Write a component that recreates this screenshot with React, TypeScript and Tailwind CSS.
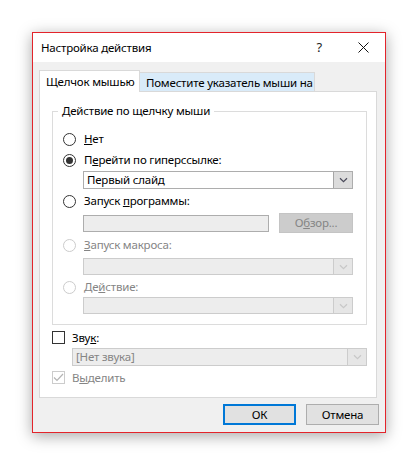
import type { ReactNode } from "react";

const font = "font-['Noto_Sans','Open_Sans',sans-serif]";

const Chevron = ({ muted }: { muted?: boolean }) => (
  <svg width="9" height="6" viewBox="0 0 9 6" fill="none">
    <path d="M1 1.2 4.5 4.6 8 1.2" stroke={muted ? "#c8c8c8" : "#4a4a5a"} strokeWidth="1.2" />
  </svg>
);

const Radio = ({
  checked,
  disabled,
  children,
}: {
  checked?: boolean;
  disabled?: boolean;
  children: ReactNode;
}) => (
  <div className="flex h-[16px] items-center">
    <span
      className={`ml-[10px] flex h-[13px] w-[13px] items-center justify-center rounded-full border bg-white ${
        disabled ? "border-[#cccccc]" : "border-[#333333]"
      }`}
    >
      {checked && <span className="h-[7px] w-[7px] rounded-full bg-[#333333]" />}
    </span>
    <span className={`ml-[8px] ${disabled ? "text-[#858585]" : "text-black"}`}>{children}</span>
  </div>
);

const Select = ({
  value,
  disabled,
  className,
}: {
  value?: string;
  disabled?: boolean;
  className: string;
}) => (
  <div
    className={`flex border ${
      disabled ? "border-[#cccccc] bg-[#ededed]" : "border-[#adadad] bg-white"
    } ${className}`}
  >
    <span className={`flex-1 pl-[3px] leading-[15px] ${disabled ? "text-[#858585]" : "text-black"}`}>
      {value}
    </span>
    <span
      className={`flex w-[19px] items-center justify-center border-l ${
        disabled ? "border-[#cccccc] bg-[#e6e6e6]" : "border-[#a6a6a6] bg-[#dcdcdc]"
      }`}
    >
      <Chevron muted={disabled} />
    </span>
  </div>
);

export default function App() {
  return (
    <div className={`h-[466px] w-[418px] bg-white pl-[32px] pt-[32px] text-[11.5px] tracking-[-0.2px] ${font}`}>
      <div className="flex h-[401px] w-[354px] flex-col border border-[#e3242b] bg-[#f0f0f0] shadow-[0_3px_14px_rgba(0,0,0,0.35)]">
        {/* title bar */}
        <div className="flex h-[29px] items-center bg-white pl-[8px]">
          <span className="flex-1 text-black">Настройка действия</span>
          <span className="mr-[36px] text-[13px] text-[#222]">?</span>
          <svg width="11" height="11" viewBox="0 0 11 11" className="mr-[16px]">
            <path d="M0.5 0.5 10.5 10.5M10.5 0.5 0.5 10.5" stroke="#111" strokeWidth="1" />
          </svg>
        </div>

        <div className="flex flex-1 flex-col px-[6px] pt-[8px]">
          {/* tabs */}
          <div className="flex h-[21px] items-end">
            <div className="relative z-10 -mb-px flex h-[22px] w-[101px] items-center whitespace-nowrap border border-b-0 border-[#d9d9d9] bg-white pl-[6px] text-black">
              Щелчок мышью
            </div>
            <div className="flex h-[19px] w-[175px] items-center overflow-hidden whitespace-nowrap border border-b-0 border-l-0 border-[#d9d9d9] bg-[#d9ebf9] pl-[6px] pt-[1px] text-black">
              Поместите указатель мыши на
            </div>
          </div>

          {/* tab page */}
          <div className="flex h-[307px] w-[338px] flex-col border border-[#d9d9d9] bg-white">
            <fieldset className="ml-[12px] mt-[11px] w-[315px] border border-[#dcdcdc] pb-[10px]">
              <legend className="ml-[5px] px-[4px] leading-[16px] text-black">Действие по щелчку мыши</legend>
              <div className="flex flex-col pt-[12px]">
                <Radio>
                  <u>Н</u>ет
                </Radio>
                <div className="mt-[5px]">
                  <Radio checked>
                    П<u>е</u>рейти по гиперссылке:
                  </Radio>
                </div>
                <Select value="Первый слайд" className="ml-[30px] mt-[3px] h-[18px] w-[270px]" />
                <div className="mt-[4px]">
                  <Radio>
                    Запуск <u>п</u>рограммы:
                  </Radio>
                </div>
                <div className="ml-[30px] mt-[4px] flex h-[20px] items-center">
                  <div className="h-[17px] w-[186px] border border-[#adadad] bg-[#ededed]" />
                  <div className="ml-[10px] flex h-[20px] w-[74px] items-center justify-center border border-[#c4c4c4] bg-[#cccccc] text-[#858585]">
                    О<u>б</u>зор...
                  </div>
                </div>
                <div className="mt-[4px]">
                  <Radio disabled>
                    <u>З</u>апуск макроса:
                  </Radio>
                </div>
                <Select disabled className="ml-[30px] mt-[5px] h-[17px] w-[270px]" />
                <div className="mt-[4px]">
                  <Radio disabled>
                    Де<u>й</u>ствие:
                  </Radio>
                </div>
                <Select disabled className="ml-[30px] mt-[2px] h-[17px] w-[270px]" />
              </div>
            </fieldset>

            {/* sound + highlight */}
            <div className="ml-[12px] mt-[6px] flex h-[13px] items-center">
              <span className="h-[13px] w-[13px] border border-[#333333] bg-white" />
              <span className="ml-[7px] text-black">
                Зву<u>к</u>:
              </span>
            </div>
            <Select value="[Нет звука]" disabled className="ml-[32px] mt-[4px] h-[18px] w-[295px]" />
            <div className="ml-[12px] mt-[5px] flex h-[13px] items-center">
              <span className="flex h-[13px] w-[13px] items-center justify-center border border-[#cccccc] bg-white">
                <svg width="11" height="9" viewBox="0 0 11 9" fill="none">
                  <path d="M1 4.5 4 7.5 10 1" stroke="#b4b4b4" strokeWidth="1.2" />
                </svg>
              </span>
              <span className="ml-[7px] text-[#858585]">
                В<u>ы</u>делить
              </span>
            </div>
          </div>

          {/* dialog buttons */}
          <div className="mt-[6px] flex justify-end gap-[10px]">
            <button className="h-[21px] w-[73px] border-2 border-[#0078d7] bg-[#e1e1e1] text-black">ОК</button>
            <button className="h-[21px] w-[73px] border border-[#adadad] bg-[#e1e1e1] text-black">Отмена</button>
          </div>
        </div>
      </div>
    </div>
  );
}
